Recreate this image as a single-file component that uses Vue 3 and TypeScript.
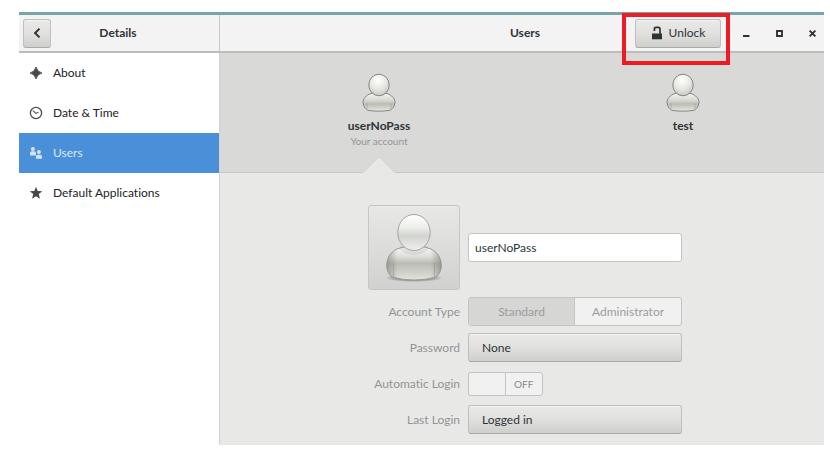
<script setup lang="ts">
import { ref } from 'vue'

interface Panel {
  id: string
  label: string
}

interface Account {
  name: string
  note?: string
}

const panels: Panel[] = [
  { id: 'about', label: 'About' },
  { id: 'time', label: 'Date & Time' },
  { id: 'users', label: 'Users' },
  { id: 'apps', label: 'Default Applications' },
]

const accounts: Account[] = [
  { name: 'userNoPass', note: 'Your account' },
  { name: 'test' },
]

const activePanel = ref('users')
const activeAccount = ref('userNoPass')
const fullName = ref('userNoPass')
const accountType = ref('Standard')
const accountTypes = ['Standard', 'Administrator']
const autoLogin = ref(false)
</script>

<template>
  <div class="window">
    <header class="titlebar">
      <div class="titlebar-side">
        <button class="btn back" type="button" aria-label="Back">
          <svg width="16" height="16" viewBox="0 0 16 16"><path d="M10.500 3.600 6.100 8l4.400 4.400" fill="none" stroke="#2e3436" stroke-width="2" /></svg>
        </button>
        <h2 class="title">Details</h2>
      </div>
      <div class="titlebar-main">
        <h1 class="title">Users</h1>
        <div class="actions">
          <div class="unlock-wrap">
            <button class="btn unlock" type="button">
              <svg width="12" height="14" viewBox="0 0 12 14">
                <path d="M3.400 5V3q0-1.700 1.700-1.700h2.200Q9 1.300 9 3v5" fill="none" stroke="#2e3436" stroke-width="1.700" />
                <path d="M1 7.500h10V13.300H1z" fill="#2e3436" />
              </svg>
              Unlock
            </button>
            <span class="highlight"></span>
          </div>
          <button class="win-btn" type="button" aria-label="Minimize">
            <svg width="9" height="9" viewBox="0 0 9 9"><path d="M1 7h6.500" stroke="#2e3436" stroke-width="2" /></svg>
          </button>
          <button class="win-btn" type="button" aria-label="Maximize">
            <svg width="9" height="9" viewBox="0 0 9 9"><path d="M2 2h5v5H2z" fill="none" stroke="#2e3436" stroke-width="1.900" /></svg>
          </button>
          <button class="win-btn" type="button" aria-label="Close">
            <svg width="9" height="9" viewBox="0 0 9 9"><path d="m1.600 1.600 5.800 5.800M7.400 1.600 1.600 7.400" stroke="#2e3436" stroke-width="1.900" /></svg>
          </button>
        </div>
      </div>
    </header>

    <div class="body">
      <nav class="sidebar">
        <a
          v-for="panel in panels"
          :key="panel.id"
          href="#"
          class="nav-item"
          :class="{ active: panel.id === activePanel }"
          @click.prevent="activePanel = panel.id"
        >
          <svg width="14" height="14" viewBox="0 0 14 14">
            <path v-if="panel.id === 'about'" d="M7 1Q8.200 5.800 13 7 8.200 8.200 7 13 5.800 8.200 1 7 5.800 5.800 7 1z" fill="#454849" stroke="#454849" stroke-width=".8" />
            <g v-else-if="panel.id === 'time'" fill="none" stroke="#4c4f50">
              <circle cx="7" cy="7" r="5.600" stroke-width="1.300" />
              <path d="M3.800 4.600 7 7.400l2.500-1.100" stroke-width="1.100" />
            </g>
            <g v-else-if="panel.id === 'users'" fill="#d5e5f5">
              <circle cx="3.900" cy="2.900" r="2" />
              <path d="M1 9.400V7.500q0-2.200 1.900-2.200h2.200Q7 5.300 7 7.500v1.900z" />
              <circle cx="9.900" cy="5.900" r="2" />
              <path d="M7 12.800v-1.900q0-2.200 1.900-2.200h2.200q1.900 0 1.900 2.200v1.900z" />
            </g>
            <path v-else d="m7 .7 1.700 4.200 4.600.3-3.500 2.900 1.100 4.600L7 10.300l-3.900 2.400 1.100-4.600L.7 5.200l4.600-.3z" fill="#454849" />
          </svg>
          {{ panel.label }}
        </a>
      </nav>

      <main class="content">
        <div class="carousel">
          <button
            v-for="account in accounts"
            :key="account.name"
            type="button"
            class="account"
            :class="{ selected: account.name === activeAccount }"
            @click="activeAccount = account.name"
          >
            <svg width="34" height="40" viewBox="0 0 34 40">
              <defs>
                <radialGradient id="head-small" cx=".45" cy=".28" r=".75">
                  <stop offset="0" stop-color="#fff" />
                  <stop offset=".55" stop-color="#e6e7e2" />
                  <stop offset="1" stop-color="#c3c5be" />
                </radialGradient>
                <linearGradient id="torso-small" x2="0" y2="1">
                  <stop offset="0" stop-color="#f8f8f6" />
                  <stop offset=".4" stop-color="#dadbd6" />
                  <stop offset=".62" stop-color="#bcbeb5" />
                  <stop offset="1" stop-color="#e6e7e1" />
                </linearGradient>
              </defs>
              <path d="M9 20.500Q17 18 25 20.500C30 22 33.200 26 33 30Q32.500 34.800 28.500 37.200Q23 38.200 17 38.200T5.500 37.200Q1.500 34.800 1 30C.8 26 4 22 9 20.500z" fill="url(#torso-small)" stroke="#858782" />
              <path d="M5 36V30.500M29 36V30.500" stroke="#a2a49c" stroke-opacity=".7" />
              <ellipse cx="17" cy="12" rx="10.200" ry="10.800" fill="url(#head-small)" stroke="#858782" />
            </svg>
            <span class="account-name">{{ account.name }}</span>
            <span v-if="account.note" class="account-note">{{ account.note }}</span>
            <svg v-if="account.name === activeAccount" class="pointer" width="34" height="18" viewBox="0 0 34 18">
              <path d="M1 17 17 1l16 16v1H1z" fill="#e8e8e7" />
              <path d="M0 17.500h1L17 1.500l16 16h1" fill="none" stroke="#c9c9c7" />
            </svg>
          </button>
        </div>

        <form class="form" @submit.prevent>
          <button class="picture" type="button" aria-label="Change picture">
            <svg width="60" height="72" viewBox="0 0 60 72">
              <defs>
                <linearGradient id="head-large" x2="0" y2="1">
                  <stop offset="0" stop-color="#fff" />
                  <stop offset=".35" stop-color="#eeefec" />
                  <stop offset=".6" stop-color="#d2d4cf" />
                  <stop offset="1" stop-color="#f0f0ee" />
                </linearGradient>
                <linearGradient id="torso-large" x2="0" y2="1">
                  <stop offset="0" stop-color="#fbfbfa" />
                  <stop offset=".3" stop-color="#e0e1dd" />
                  <stop offset=".52" stop-color="#bbbdb3" />
                  <stop offset="1" stop-color="#e1e2dc" />
                </linearGradient>
                <linearGradient id="arm-shade">
                  <stop offset="0" stop-color="#777970" stop-opacity=".5" />
                  <stop offset=".2" stop-color="#777970" stop-opacity="0" />
                  <stop offset=".8" stop-color="#777970" stop-opacity="0" />
                  <stop offset="1" stop-color="#777970" stop-opacity=".5" />
                </linearGradient>
                <radialGradient id="ground">
                  <stop offset=".6" stop-color="#555" stop-opacity=".5" />
                  <stop offset="1" stop-color="#555" stop-opacity="0" />
                </radialGradient>
              </defs>
              <ellipse cx="30" cy="66" rx="29" ry="4" fill="url(#ground)" />
              <path d="M16 36Q30 31 44 36C52 38 57.500 45 57.300 54Q57 61 52 65Q42 68 30 68T8 65Q3 61 2.700 54C2.500 45 8 38 16 36z" fill="url(#torso-large)" stroke="#9b9d98" />
              <path d="M16 36Q30 31 44 36C52 38 57.500 45 57.300 54Q57 61 52 65H8Q3 61 2.700 54C2.500 45 8 38 16 36z" fill="url(#arm-shade)" />
              <path d="M9.500 65V51M50.500 65V51" stroke="#85877f" stroke-opacity=".4" />
              <path d="M15 37Q30 49 45 37L42 33H18z" fill="#777" fill-opacity=".12" />
              <ellipse cx="30" cy="20.500" rx="16.200" ry="18" fill="url(#head-large)" stroke="#a3a5a0" />
            </svg>
          </button>
          <input v-model="fullName" class="entry" type="text" aria-label="Full name" />

          <span id="type-label" class="label">Account Type</span>
          <div class="segmented" role="radiogroup" aria-labelledby="type-label">
            <label v-for="type in accountTypes" :key="type" class="segment" :class="{ checked: type === accountType }">
              <input v-model="accountType" class="native" type="radio" name="account-type" :value="type" disabled />
              {{ type }}
            </label>
          </div>

          <label class="label" for="password">Password</label>
          <button id="password" class="btn field" type="button">None</button>

          <label class="label" for="auto-login">Automatic Login</label>
          <div class="switch" :class="{ on: autoLogin }">
            <input id="auto-login" v-model="autoLogin" class="native" type="checkbox" role="switch" disabled />
            <span class="knob"></span>
            <span class="state">OFF</span>
          </div>

          <label class="label" for="last-login">Last Login</label>
          <button id="last-login" class="btn field" type="button">Logged in</button>
        </form>
      </main>
    </div>
  </div>
</template>

<style>
body {
  background: #fff;
}
</style>

<style scoped>
.window {
  display: flex;
  flex-direction: column;
  box-sizing: border-box;
  margin: 0 6px 0 19px;
  padding: 12px 0 8px;
  min-height: 100vh;
  font-family: Lato, "Noto Sans", sans-serif;
  font-size: 12px;
  line-height: 16px;
  font-variant-ligatures: none;
  color: #2e3436;
}

button,
input {
  font: inherit;
  color: inherit;
}

button {
  padding: 0;
}

svg {
  display: block;
  flex: none;
}

.titlebar {
  display: flex;
  height: 41px;
  box-sizing: border-box;
  border-top: 3px solid #78a3a8;
  border-bottom: 2px solid #bcbcb8;
  background: #f3f3f3;
}

.titlebar-side {
  display: grid;
  grid-template-columns: 28px 1fr 28px;
  align-items: center;
  box-sizing: border-box;
  flex: none;
  width: 201px;
  padding: 0 6px 0 4px;
  border-right: 1px solid #c8c8c6;
}

.title {
  margin: 0;
  font-size: 12px;
  font-weight: 700;
  text-align: center;
}

.btn {
  box-sizing: border-box;
  border: 1px solid #bfbfbd;
  border-bottom-color: #a9a9a7;
  border-radius: 3px;
  background: linear-gradient(#e9e9e8, #e0e0df 50%, #cfcfcd);
  box-shadow: inset 0 1px #f3f3f2;
}

.back {
  display: grid;
  place-items: center;
  height: 29px;
}

.titlebar-main {
  display: grid;
  grid-template-columns: 1fr auto 1fr;
  align-items: center;
  flex: 1;
  padding-left: 6px;
}

.titlebar-main .title {
  grid-column: 2;
}

.actions {
  display: flex;
  align-items: center;
  justify-content: flex-end;
  padding-right: 3px;
}

.unlock-wrap {
  position: relative;
  margin-right: 9px;
}

.unlock {
  display: flex;
  align-items: center;
  justify-content: center;
  gap: 6px;
  width: 86px;
  height: 29px;
}

.highlight {
  position: absolute;
  inset: -6px -9px -17px -13px;
  border: 4px solid #ed1c24;
  pointer-events: none;
}

.win-btn {
  display: grid;
  place-items: center;
  width: 33px;
  height: 29px;
  border: 0;
  background: none;
}

.win-btn:last-child {
  width: 17px;
  margin-left: 8px;
}

.body {
  display: flex;
  flex: 1;
}

.sidebar {
  box-sizing: border-box;
  flex: none;
  width: 200px;
  background: #fff;
}

.nav-item {
  display: flex;
  align-items: center;
  gap: 10px;
  height: 40px;
  padding-left: 10px;
  color: #222;
  text-decoration: none;
}

.nav-item.active {
  background: #4a90d9;
  color: #dbe9f7;
}

.content {
  flex: 1;
  border-left: 1px solid #d2d2d0;
  background: #e8e8e7;
}

.carousel {
  display: grid;
  grid-template-columns: 1fr 1fr;
  gap: 22px;
  box-sizing: border-box;
  height: 120px;
  padding-left: 18px;
  border-bottom: 1px solid #c9c9c7;
  background: #d9d9d8;
}

.account {
  position: relative;
  display: flex;
  flex-direction: column;
  align-items: center;
  padding-top: 20px;
  border: 0;
  background: none;
}

.account-name {
  margin-top: 5px;
  font-weight: 700;
}

.account-note {
  font-size: 10px;
  line-height: 14px;
  color: #929595;
}

.pointer {
  position: absolute;
  bottom: -1px;
  left: calc(50% - 17px);
}

.form {
  display: grid;
  grid-template-columns: 92px 214px;
  grid-auto-rows: 29px;
  grid-template-rows: 85px;
  gap: 7px 8px;
  align-items: center;
  justify-content: center;
  padding: 32px 0 9px 6px;
}

.picture {
  display: grid;
  place-items: center;
  height: 85px;
  border: 1px solid #c6c6c4;
  border-radius: 3px;
  background: linear-gradient(#e8e8e7, #d1d1d0);
}

.entry {
  box-sizing: border-box;
  width: 100%;
  height: 29px;
  padding: 0 6px;
  border: 1px solid #c5c5c3;
  border-radius: 3px;
  background: #fff;
}

.label {
  justify-self: end;
  white-space: nowrap;
  color: #929595;
}

.segmented {
  display: grid;
  grid-template-columns: 1fr 1fr;
  box-sizing: border-box;
  height: 29px;
  border: 1px solid #c3c3c1;
  border-radius: 3px;
  background: #f1f1f1;
  color: #9a9d9d;
}

.segment {
  position: relative;
  display: grid;
  place-items: center;
}

.segment.checked {
  border-right: 1px solid #c3c3c1;
  background: #d6d6d5;
}

.native {
  position: absolute;
  inset: 0;
  margin: 0;
  opacity: 0;
}

.field {
  width: 100%;
  height: 29px;
  padding: 0 13px;
  text-align: left;
}

.switch {
  position: relative;
  display: grid;
  grid-template-columns: 1fr 1fr;
  box-sizing: border-box;
  width: 75px;
  height: 24px;
  border: 1px solid #c3c3c1;
  border-radius: 3px;
  background: #f1f1f1;
}

.knob {
  border-right: 1px solid #c3c3c1;
}

.state {
  place-self: center;
  font-size: 10px;
  line-height: 14px;
  color: #858888;
}
</style>
